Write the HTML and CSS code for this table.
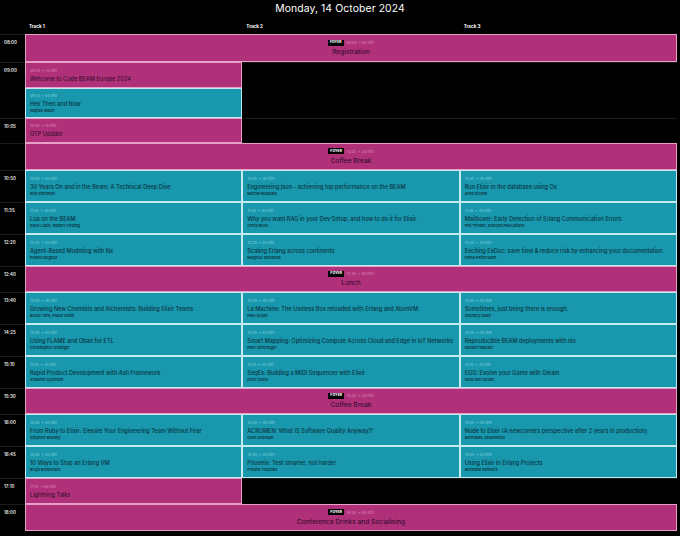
FILE: index.html
```html
<!DOCTYPE html>
<html lang="en">
<head>
<meta charset="utf-8">
<title>Monday, 14 October 2024</title>
<link rel="stylesheet" href="styles.css">
</head>
<body>
<h1 class="day">Monday, 14 October 2024</h1>
<div class="schedule">
  <div class="corner"></div>
  <div class="track">Track 1</div>
  <div class="track">Track 2</div>
  <div class="track">Track 3</div>

  <div class="slot r1">08:00</div>
  <div class="slot r2">09:00</div>
  <div class="slot r4">10:05</div>
  <div class="slot r5"></div>
  <div class="slot r6">10:50</div>
  <div class="slot r7">11:35</div>
  <div class="slot r8">12:20</div>
  <div class="slot r9">12:40</div>
  <div class="slot r10">13:40</div>
  <div class="slot r11">14:25</div>
  <div class="slot r12">15:10</div>
  <div class="slot r13">15:30</div>
  <div class="slot r14">16:00</div>
  <div class="slot r15">16:45</div>
  <div class="slot r16">17:10</div>
  <div class="slot r17">18:00</div>

  <div class="card plenary pink r1 all">
    <div class="meta"><span class="room">FOYER</span><span class="time">08:00 → 60 min</span></div>
    <div class="title">Registration</div>
  </div>

  <div class="card pink r2 t1">
    <div class="time">09:00 → 15 min</div>
    <div class="title">Welcome to Code BEAM Europe 2024</div>
  </div>
  <div class="card teal r3 t1">
    <div class="time">09:15 → 45 min</div>
    <div class="title">Hex Then and Now</div>
    <div class="speaker">Wojtek Mach</div>
  </div>
  <div class="card pink r4 t1">
    <div class="time">10:05 → 15 min</div>
    <div class="title">OTP Update</div>
  </div>

  <div class="card plenary pink r5 all">
    <div class="meta"><span class="room">FOYER</span><span class="time">10:20 → 30 min</span></div>
    <div class="title">Coffee Break</div>
  </div>

  <div class="card teal r6 t1">
    <div class="time">10:50 → 40 min</div>
    <div class="title">30 Years On and in the Beam: A Technical Deep Dive</div>
    <div class="speaker">Erik Stenman</div>
  </div>
  <div class="card teal r6 t2">
    <div class="time">10:50 → 40 min</div>
    <div class="title">Engineering json - achieving top performance on the BEAM</div>
    <div class="speaker">Michał Muskała</div>
  </div>
  <div class="card teal r6 t3">
    <div class="time">10:50 → 40 min</div>
    <div class="title">Run Elixir in the database using Ox</div>
    <div class="speaker">Arno Dirlam</div>
  </div>

  <div class="card teal r7 t1">
    <div class="time">11:35 → 40 min</div>
    <div class="title">Lua on the BEAM</div>
    <div class="speaker">Dave Lucia, Robert Virding</div>
  </div>
  <div class="card teal r7 t2">
    <div class="time">11:35 → 40 min</div>
    <div class="title">Why you want RAG in your Dev Setup, and how to do it for Elixir</div>
    <div class="speaker">Chris Beck</div>
  </div>
  <div class="card teal r7 t3">
    <div class="time">11:35 → 40 min</div>
    <div class="title">Mailboxer: Early Detection of Erlang Communication Errors</div>
    <div class="speaker">Phil Trinder, Duncan Paul Attard</div>
  </div>

  <div class="card teal r8 t1">
    <div class="time">12:20 → 20 min</div>
    <div class="title">Agent-Based Modeling with Nx</div>
    <div class="speaker">Paweł Długosz</div>
  </div>
  <div class="card teal r8 t2">
    <div class="time">12:20 → 20 min</div>
    <div class="title">Scaling Erlang across continents</div>
    <div class="speaker">Magnus Sedlacek</div>
  </div>
  <div class="card teal r8 t3">
    <div class="time">12:20 → 20 min</div>
    <div class="title">Exciting ExDoc: save time &amp; reduce risk by enhancing your documentation</div>
    <div class="speaker">Fiona Pettersson</div>
  </div>

  <div class="card plenary pink r9 all">
    <div class="meta"><span class="room">FOYER</span><span class="time">12:40 → 60 min</span></div>
    <div class="title">Lunch</div>
  </div>

  <div class="card teal r10 t1">
    <div class="time">13:40 → 40 min</div>
    <div class="title">Growing New Chemists and Alchemists: Building Elixir Teams</div>
    <div class="speaker">Bruce Tate, Paulo Valim</div>
  </div>
  <div class="card teal r10 t2">
    <div class="time">13:40 → 40 min</div>
    <div class="title">La Machine: The Useless Box reloaded with Erlang and AtomVM</div>
    <div class="speaker">Paul Guyot</div>
  </div>
  <div class="card teal r10 t3">
    <div class="time">13:40 → 40 min</div>
    <div class="title">Sometimes, just being there is enough.</div>
    <div class="speaker">Zachary Daan</div>
  </div>

  <div class="card teal r11 t1">
    <div class="time">14:25 → 40 min</div>
    <div class="title">Using FLAME and Oban for ETL</div>
    <div class="speaker">Christopher Grainger</div>
  </div>
  <div class="card teal r11 t2">
    <div class="time">14:25 → 40 min</div>
    <div class="title">Smart Mapping: Optimizing Compute Across Cloud and Edge in IoT Networks</div>
    <div class="speaker">Peer Stritzinger</div>
  </div>
  <div class="card teal r11 t3">
    <div class="time">14:25 → 40 min</div>
    <div class="title">Reproducible BEAM deployments with nix</div>
    <div class="speaker">Norbert Melzer</div>
  </div>

  <div class="card teal r12 t1">
    <div class="time">15:10 → 20 min</div>
    <div class="title">Rapid Product Development with Ash Framework</div>
    <div class="speaker">Srikanth Kyatham</div>
  </div>
  <div class="card teal r12 t2">
    <div class="time">15:10 → 20 min</div>
    <div class="title">SeqEx: Building a MIDI Sequencer with Elixir</div>
    <div class="speaker">Dino Costa</div>
  </div>
  <div class="card teal r12 t3">
    <div class="time">15:10 → 20 min</div>
    <div class="title">EGG: Evolve your Game with Gleam</div>
    <div class="speaker">Kero van Gelder</div>
  </div>

  <div class="card plenary pink r13 all">
    <div class="meta"><span class="room">FOYER</span><span class="time">15:30 → 30 min</span></div>
    <div class="title">Coffee Break</div>
  </div>

  <div class="card teal r14 t1">
    <div class="time">16:00 → 40 min</div>
    <div class="title">From Ruby to Elixir: Elevate Your Engineering Team Without Fear</div>
    <div class="speaker">Stephen Bussey</div>
  </div>
  <div class="card teal r14 t2">
    <div class="time">16:00 → 40 min</div>
    <div class="title">ACRUMEN: What IS Software Quality Anyway?!</div>
    <div class="speaker">Dave Aronson</div>
  </div>
  <div class="card teal r14 t3">
    <div class="time">16:00 → 40 min</div>
    <div class="title">Node to Elixir (A newcomers perspective after 2 years in production)</div>
    <div class="speaker">Barnabas Jovanovics</div>
  </div>

  <div class="card teal r15 t1">
    <div class="time">16:45 → 20 min</div>
    <div class="title">10 Ways to Stop an Erlang VM</div>
    <div class="speaker">Brujo Benavides</div>
  </div>
  <div class="card teal r15 t2">
    <div class="time">16:45 → 20 min</div>
    <div class="title">Phoenix: Test smarter, not harder</div>
    <div class="speaker">Fredrik Teschke</div>
  </div>
  <div class="card teal r15 t3">
    <div class="time">16:45 → 20 min</div>
    <div class="title">Using Elixir in Erlang Projects</div>
    <div class="speaker">Benedikt Reinartz</div>
  </div>

  <div class="card pink r16 t1">
    <div class="time">17:10 → 50 min</div>
    <div class="title">Lightning Talks</div>
  </div>

  <div class="card plenary pink r17 all">
    <div class="meta"><span class="room">FOYER</span><span class="time">18:00 → 90 min</span></div>
    <div class="title">Conference Drinks and Socialising</div>
  </div>
</div>
</body>
</html>
```

FILE: styles.css
```css
html, body {
  margin: 0;
  padding: 0;
  background: #000;
}

body {
  font-family: Inter, "Open Sans", sans-serif;
  color: #fff;
}

.day {
  margin: 0;
  height: 19px;
  line-height: 18px;
  text-align: center;
  font-size: 10.4px;
  font-weight: 400;
  letter-spacing: 0.1px;
}

.schedule {
  display: grid;
  width: 677px;
  grid-template-columns: 25px repeat(3, 1fr);
  grid-template-rows: 15px 28px 26px 30px 25px 27px 32px 32px 32px 26px 32px 32px 32px 26px 32px 32px 26px 27px;
}

.track {
  font-size: 4.6px;
  font-weight: 700;
  padding-left: 4px;
  align-self: center;
}

.slot {
  grid-column: 1 / -1;
  border-top: 1px solid #1b1b1b;
  font-size: 4.4px;
  font-weight: 600;
  color: #e6e6e6;
  padding: 4.5px 0 0 4px;
  line-height: 5px;
}

.r1 { grid-row: 2; }
.r2 { grid-row: 3; }
.r3 { grid-row: 4; }
.r4 { grid-row: 5; }
.r5 { grid-row: 6; }
.r6 { grid-row: 7; }
.r7 { grid-row: 8; }
.r8 { grid-row: 9; }
.r9 { grid-row: 10; }
.r10 { grid-row: 11; }
.r11 { grid-row: 12; }
.r12 { grid-row: 13; }
.r13 { grid-row: 14; }
.r14 { grid-row: 15; }
.r15 { grid-row: 16; }
.r16 { grid-row: 17; }
.r17 { grid-row: 18; }

.t1 { grid-column: 2; }
.t2 { grid-column: 3; }
.t3 { grid-column: 4; }
.all { grid-column: 2 / 5; }

.card {
  display: flex;
  flex-direction: column;
  justify-content: center;
  padding: 0 4px;
  border: 1px solid;
  min-width: 0;
  overflow: hidden;
}

.pink {
  background: #b0317a;
  border-color: #e7a1c9;
  color: #3a0f31;
}

.teal {
  background: #1897ad;
  border-color: #c4eaf1;
  color: #0b3542;
}

.card .time {
  font-size: 3.7px;
  line-height: 5px;
  margin-bottom: 3px;
  white-space: nowrap;
}

.pink .time { color: #dc8cbc; }
.teal .time { color: #86d3df; }

.card .title {
  font-size: 5.6px;
  line-height: 7px;
  font-weight: 500;
  white-space: nowrap;
}

.card .speaker {
  font-size: 3.9px;
  line-height: 5px;
  font-weight: 600;
  white-space: nowrap;
}

.plenary {
  align-items: center;
}

.plenary .meta {
  display: flex;
  align-items: center;
  gap: 2.5px;
  height: 6px;
  margin-bottom: 2.5px;
}

.plenary .meta .time {
  margin: 0;
  line-height: 5px;
}

.room {
  background: #000;
  color: #fff;
  font-size: 3.4px;
  font-weight: 800;
  line-height: 5px;
  padding: 0.5px 2px;
  letter-spacing: 0.1px;
}

.plenary .title {
  font-size: 6.6px;
  line-height: 8px;
}
```
